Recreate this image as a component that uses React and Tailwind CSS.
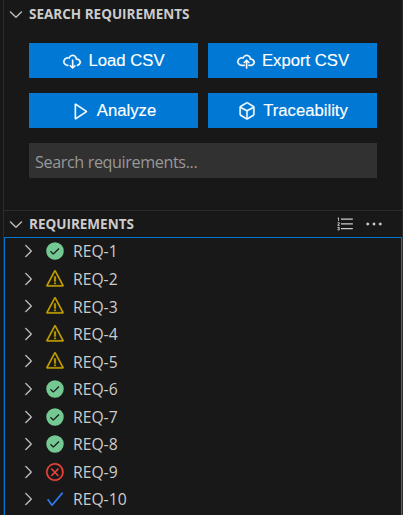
import {
  VscCheck,
  VscChevronDown,
  VscChevronRight,
  VscCloudDownload,
  VscCloudUpload,
  VscEllipsis,
  VscError,
  VscListOrdered,
  VscPassFilled,
  VscPlay,
  VscSymbolMethod,
  VscWarning,
} from "react-icons/vsc";

const icons = {
  pass: <VscPassFilled size={20} className="text-[#73c991]" />,
  warning: <VscWarning size={20} className="stroke-current [stroke-width:0.3]" color="#cca700" />,
  error: <VscError size={20} className="stroke-current [stroke-width:0.3]" color="#f8453f" />,
  check: <VscCheck size={20} className="stroke-current [stroke-width:0.35]" color="#3080ff" />,
};

const rows = ["pass", "warning", "warning", "warning", "warning", "pass", "pass", "pass", "error", "check"];

const buttonIcon = "mr-1.5 shrink-0 stroke-current [stroke-width:0.3]";

function Button({ icon, children }) {
  return (
    <button className="flex h-[35px] items-center justify-center bg-[#0078d4] font-['Liberation_Sans',Arial,sans-serif] text-[16.7px] text-white [-webkit-text-stroke:0.15px_white]">
      {icon}
      <span className="whitespace-nowrap">{children}</span>
    </button>
  );
}

function SectionHeader({ title, children }) {
  return (
    <div className="flex h-[27px] items-center pl-[2px]">
      <VscChevronDown size={20} className="mb-px stroke-current [stroke-width:0.2]" />
      <h2 className="ml-[3px] text-[13.5px] leading-none font-bold whitespace-nowrap">{title}</h2>
      {children}
    </div>
  );
}

export default function App() {
  return (
    <div className="flex h-[515px] w-[403px] flex-col overflow-hidden border-r border-[#2b2b2b] bg-[#181818] font-['Open_Sans','Noto_Sans',sans-serif] text-[#cccccc]">
      <div className="ml-[3px] flex min-h-0 flex-1 flex-col border-l border-[#2b2b2b]">
        <section className="h-[210px] shrink-0 pt-px">
          <SectionHeader title="SEARCH REQUIREMENTS" />
          <div className="mx-[25px] mt-[15px] grid grid-cols-2 gap-x-[10px] gap-y-[15px]">
            <Button icon={<VscCloudDownload size={20} className={buttonIcon} />}>Load CSV</Button>
            <Button icon={<VscCloudUpload size={20} className={buttonIcon} />}>Export CSV</Button>
            <Button icon={<VscPlay size={20} className={buttonIcon} />}>Analyze</Button>
            <Button icon={<VscSymbolMethod size={20} className={buttonIcon} />}>Traceability</Button>
            <input
              placeholder="Search requirements..."
              className="col-span-2 h-[35px] bg-[#313131] px-[6px] pt-[2px] text-[16.2px] tracking-[-0.4px] outline-none placeholder:text-[#989898]"
            />
          </div>
        </section>
        <section className="flex min-h-0 flex-1 flex-col border-t border-[#2b2b2b]">
          <div className="h-[26px] shrink-0">
            <SectionHeader title="REQUIREMENTS">
              <VscListOrdered size={19} className="mb-px ml-auto" />
              <VscEllipsis size={20} className="mr-[18px] mb-px ml-[10px] stroke-current [stroke-width:0.3]" />
            </SectionHeader>
          </div>
          <ul className="min-h-0 flex-1 overflow-hidden border-x border-t border-[#0078d4]">
            {rows.map((kind, i) => (
              <li key={i} className="flex h-[27.55px] items-center pl-[13px]">
                <VscChevronRight size={20} className="mb-px stroke-current [stroke-width:0.2]" />
                <span className="mb-px ml-[7px]">{icons[kind]}</span>
                <span className="ml-[8px] pt-px text-[15.7px] leading-none">REQ-{i + 1}</span>
              </li>
            ))}
          </ul>
        </section>
      </div>
    </div>
  );
}
